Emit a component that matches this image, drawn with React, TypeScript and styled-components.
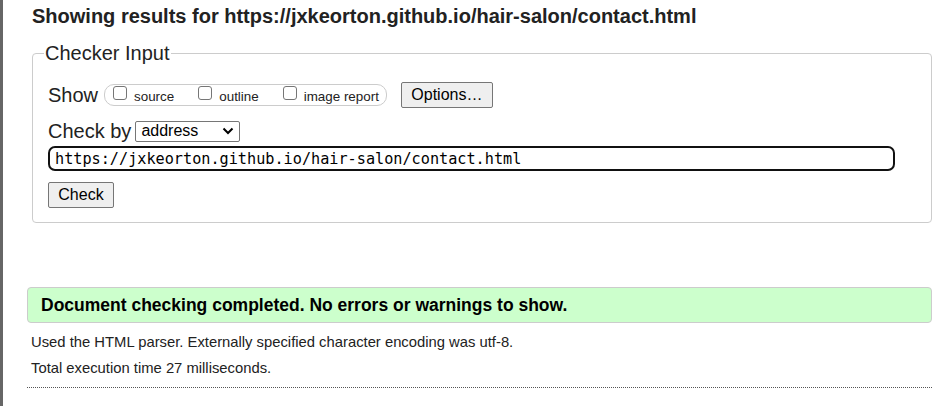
import styled, { createGlobalStyle } from 'styled-components';

const GlobalStyle = createGlobalStyle`
  html, body {
    margin: 0;
    padding: 0;
    background: #fff;
  }
  body {
    font-family: "Liberation Sans", Arial, sans-serif;
    color: #000;
  }
`;

const Page = styled.div`
  border-left: 3px solid #666;
  min-height: 406px;
  box-sizing: border-box;
  padding: 4px 18px 0 24px;
`;

const TitleH2 = styled.h2`
  margin: 0 0 0 5px;
  font-size: 20px;
  line-height: 24px;
  font-weight: bold;
  color: #222;
`;

const InputFieldset = styled.fieldset`
  margin: 13px 0 0 5px;
  padding: 0 15px 14px 15px;
  border: 1px solid #ccc;
  border-radius: 4px;
  width: 900px;
  box-sizing: border-box;
`;

const InputLegend = styled.legend`
  font-size: 20px;
  line-height: 24px;
  padding: 0 1px;
  margin-left: -4px;
  color: #222;
`;

const FormRow = styled.div<{ $top: number }>`
  display: flex;
  align-items: center;
  margin-top: ${(p) => p.$top}px;
`;

const RowLabel = styled.span`
  font-size: 20px;
  line-height: 24px;
  color: #222;
  margin-right: 6px;
`;

const OptionGroup = styled.div`
  display: flex;
  align-items: center;
  height: 22px;
  box-sizing: border-box;
  border: 1px solid #ccc;
  border-radius: 10px;
  padding: 0 7px 0 8px;
  gap: 24px;
`;

const OptionLabel = styled.label`
  display: flex;
  align-items: center;
  font-size: 13.4px;
  line-height: 16px;
  color: #222;
  gap: 7px;
  padding-top: 3px;
`;

const Box = styled.span`
  display: inline-block;
  width: 14px;
  height: 14px;
  box-sizing: border-box;
  border: 1px solid #767676;
  border-radius: 3px;
  background: #fff;
  margin-top: -7px;
`;

const Button = styled.button<{ $width: number; $left?: number }>`
  font-family: "Liberation Sans", Arial, sans-serif;
  font-size: 16px;
  color: #000;
  background: #efefef;
  border: 1px solid #767676;
  border-radius: 2px;
  padding: 0;
  width: ${(p) => p.$width}px;
  height: 26px;
  margin-left: ${(p) => p.$left ?? 0}px;
`;

const SelectBox = styled.div`
  display: flex;
  align-items: center;
  justify-content: space-between;
  width: 105px;
  height: 21px;
  box-sizing: border-box;
  border: 1px solid #767676;
  border-radius: 2px;
  padding: 0 5px 0 5px;
  font-size: 16px;
  color: #000;
  margin-left: -2px;
`;

const UrlInput = styled.div`
  width: 847px;
  height: 25px;
  box-sizing: border-box;
  border: 2px solid #111;
  border-radius: 7px;
  padding: 0 0 0 5px;
  display: flex;
  align-items: center;
  font-family: "DejaVu Sans Mono", "Liberation Mono", monospace;
  font-size: 15.2px;
  color: #000;
`;

const SuccessBox = styled.div`
  margin-top: 64px;
  width: 905px;
  height: 36px;
  box-sizing: border-box;
  background: #ccffcc;
  border: 1px solid #ccc;
  border-radius: 4px;
  padding: 0 13px;
  display: flex;
  align-items: center;
  font-size: 17.5px;
  font-weight: bold;
  color: #000;
`;

const InfoP = styled.p<{ $top: number }>`
  margin: ${(p) => p.$top}px 0 0 4px;
  font-size: 14.8px;
  line-height: 17px;
  color: #222;
`;

const Rule = styled.hr`
  margin: 10px 0 0 0;
  width: 905px;
  border: none;
  border-top: 1px dotted #555;
  height: 0;
`;

const Check = ({ label }: { label: string }) => (
  <OptionLabel>
    <Box />
    {label}
  </OptionLabel>
);

const App = () => {
  return (
    <>
      <GlobalStyle />
      <Page>
        <TitleH2>
          Showing results for https://jxkeorton.github.io/hair-salon/contact.html
        </TitleH2>
        <InputFieldset>
          <InputLegend>Checker Input</InputLegend>
          <FormRow $top={17}>
            <RowLabel>Show</RowLabel>
            <OptionGroup>
              <Check label="source" />
              <Check label="outline" />
              <Check label="image report" />
            </OptionGroup>
            <Button $width={92} $left={14}>
              Options…
            </Button>
          </FormRow>
          <FormRow $top={11}>
            <RowLabel>Check by</RowLabel>
            <SelectBox>
              address
              <svg width="12" height="8" viewBox="0 0 12 8">
                <path d="M1.5 1.5 L6 6 L10.5 1.5" fill="none" stroke="#000" strokeWidth="2" />
              </svg>
            </SelectBox>
          </FormRow>
          <FormRow $top={3}>
            <UrlInput>https://jxkeorton.github.io/hair-salon/contact.html</UrlInput>
          </FormRow>
          <FormRow $top={11}>
            <Button $width={66}>Check</Button>
          </FormRow>
        </InputFieldset>
        <SuccessBox>Document checking completed. No errors or warnings to show.</SuccessBox>
        <InfoP $top={11}>
          Used the HTML parser. Externally specified character encoding was utf-8.
        </InfoP>
        <InfoP $top={9}>Total execution time 27 milliseconds.</InfoP>
        <Rule />
      </Page>
    </>
  );
};

export default App;
